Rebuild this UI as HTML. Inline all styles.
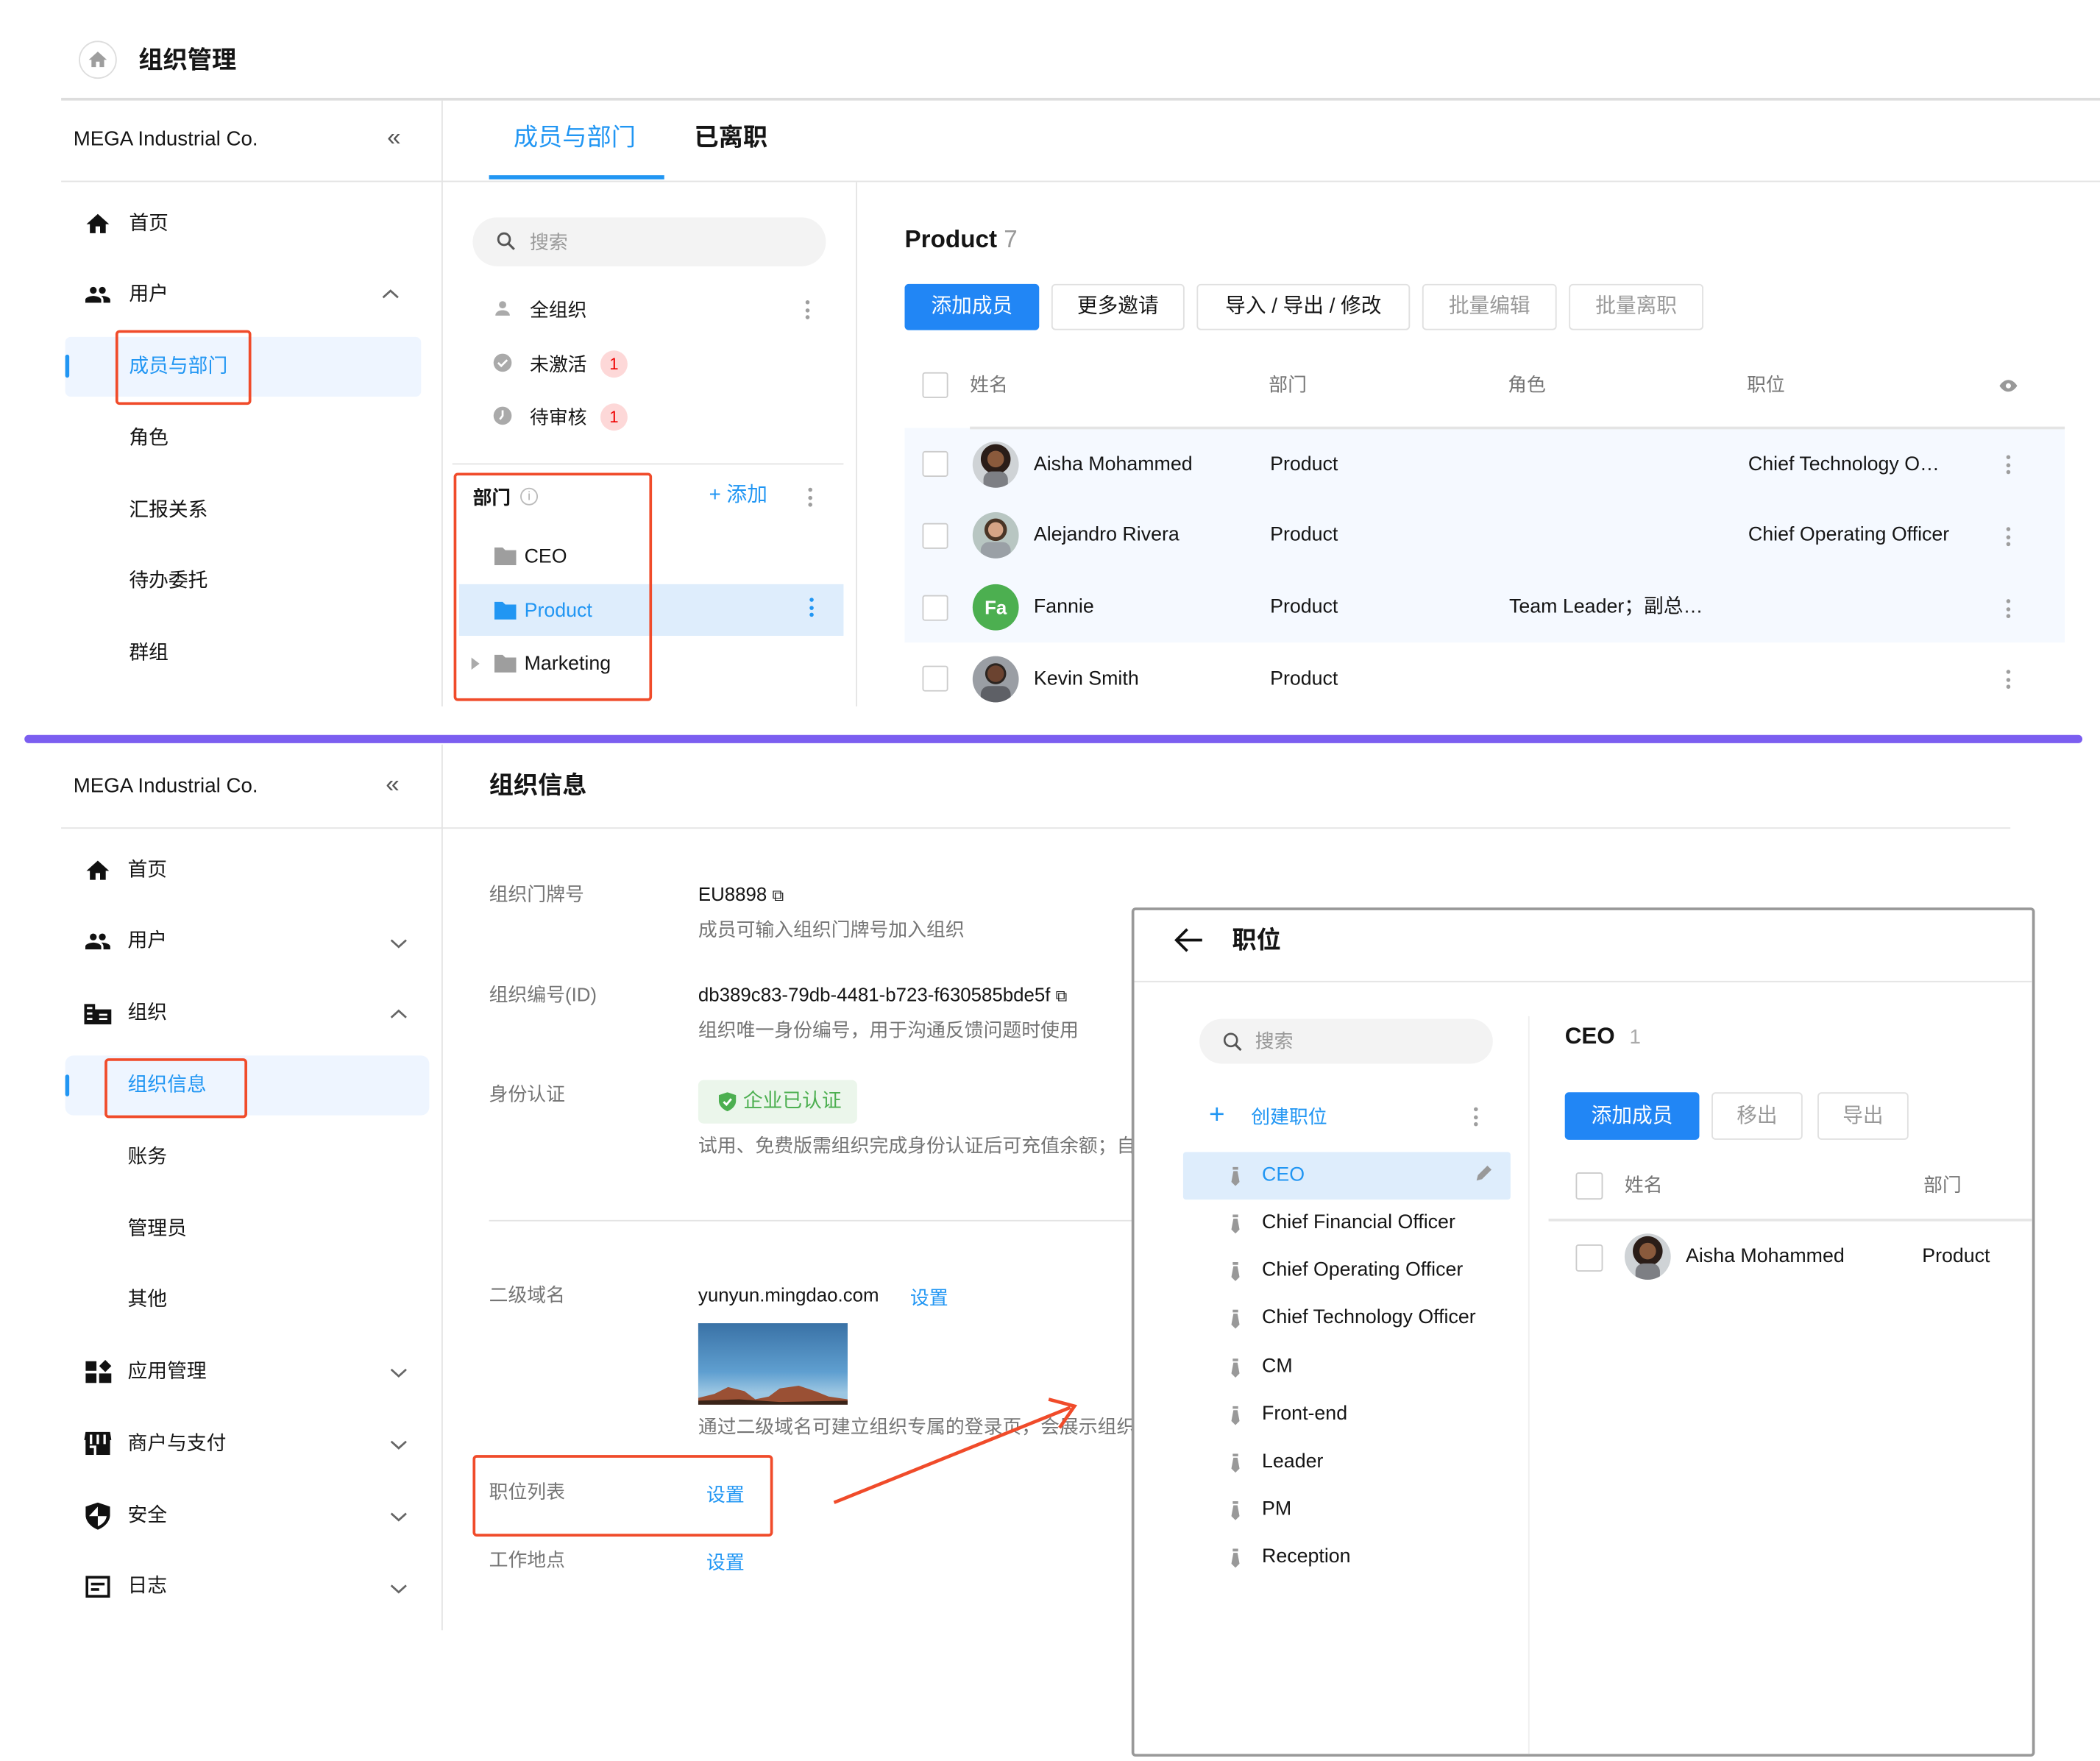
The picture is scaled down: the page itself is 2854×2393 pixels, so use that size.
<!DOCTYPE html>
<html><head><meta charset="utf-8">
<style>
html,body{margin:0;padding:0;background:#fff;}
body{width:2854px;height:2393px;overflow:hidden;position:relative;}
#w{position:absolute;left:0;top:0;width:1546px;height:1296px;transform:scale(1.8461);transform-origin:0 0;font-family:"Liberation Sans","Noto Sans CJK SC",sans-serif;color:#151515;}
.t{position:absolute;line-height:20px;white-space:nowrap;font-size:14.5px;}
.a{position:absolute;}
.g{color:#757575}
.b{color:#2196f3}
.hl{position:absolute;height:1px;background:#e4e4e4}
.vl{position:absolute;width:1px;background:#e4e4e4}
.red{position:absolute;border:2.5px solid #f04b2a;border-radius:3px;box-sizing:border-box}
.btn{position:absolute;height:34px;border:1px solid #e0e0e0;border-radius:3px;box-sizing:border-box;font-size:15px;line-height:32px;text-align:center;background:#fff}
.cb{position:absolute;width:19px;height:19px;border:1px solid #ccc;border-radius:2px;box-sizing:border-box;background:#fff}
.av{position:absolute;width:34px;height:34px;border-radius:50%;overflow:hidden}
.dots{position:absolute;width:3px;}
.dots i{display:block;width:3px;height:3px;border-radius:50%;background:#9e9e9e;margin-bottom:2.5px}
.tie{position:absolute;width:6px;height:12px}
</style></head><body><div id="w">

<!-- header -->
<div class="a" style="left:58px;top:30px;width:28px;height:28px;border-radius:50%;border:1px solid #ddd;box-sizing:border-box"></div>
<svg class="a" style="left:64px;top:36px" width="16" height="16" viewBox="0 0 24 24"><path d="M10 20v-6h4v6h5v-8h3L12 3 2 12h3v8z" fill="#9e9e9e"/></svg>
<div class="t" style="left:102px;top:34px;font-size:18px;font-weight:bold">组织管理</div>
<div class="hl" style="left:45px;top:72px;width:1501px;height:2px;background:#ddd"></div>

<!-- top sidebar -->
<div class="t" style="left:54px;top:93px;font-size:15px">MEGA Industrial Co.</div>
<div class="t" style="left:285px;top:91px;font-size:18px;color:#555">«</div>
<div class="hl" style="left:45px;top:133px;width:1501px"></div>
<div class="vl" style="left:325px;top:74px;height:446px"></div>

<svg class="a" style="left:62px;top:155px" width="20" height="20" viewBox="0 0 24 24"><path d="M10 20v-6h4v6h5v-8h3L12 3 2 12h3v8z" fill="#111"/></svg>
<div class="t" style="left:95px;top:155px">首页</div>
<svg class="a" style="left:61px;top:207px" width="22" height="20" viewBox="0 0 24 24"><path d="M16 11c1.66 0 3-1.34 3-3s-1.34-3-3-3-3 1.34-3 3 1.34 3 3 3zm-8 0c1.66 0 3-1.34 3-3S9.66 5 8 5 5 6.34 5 8s1.34 3 3 3zm0 2c-2.33 0-7 1.17-7 3.5V19h14v-2.5c0-2.33-4.67-3.5-7-3.5zm8 0c-.29 0-.62.02-.97.05 1.16.84 1.97 1.97 1.97 3.45V19h6v-2.5c0-2.33-4.67-3.5-7-3.5z" fill="#111"/></svg>
<div class="t" style="left:95px;top:207px">用户</div>
<svg class="a" style="left:281px;top:212px" width="13" height="9" viewBox="0 0 13 9"><path d="M1 7l5.5-5 5.5 5" stroke="#666" stroke-width="1.5" fill="none"/></svg>
<div class="a" style="left:48px;top:248px;width:262px;height:44px;background:#eef5ff;border-radius:4px"></div>
<div class="a" style="left:48px;top:261px;width:3px;height:17px;background:#2196f3;border-radius:2px"></div>
<div class="t b" style="left:95px;top:260px">成员与部门</div>
<div class="red" style="left:85px;top:243px;width:100px;height:55px"></div>
<div class="t" style="left:95px;top:313px">角色</div>
<div class="t" style="left:95px;top:366px">汇报关系</div>
<div class="t" style="left:95px;top:418px">待办委托</div>
<div class="t" style="left:95px;top:471px">群组</div>

<!-- tabs -->
<div class="t b" style="left:378px;top:91px;font-size:18px">成员与部门</div>
<div class="a" style="left:360px;top:129px;width:129px;height:3px;background:#2196f3"></div>
<div class="t" style="left:511px;top:91px;font-size:18px;font-weight:bold">已离职</div>

<!-- middle panel -->
<div class="vl" style="left:630px;top:134px;height:386px"></div>
<div class="a" style="left:348px;top:160px;width:260px;height:36px;background:#f3f3f3;border-radius:18px"></div>
<svg class="a" style="left:364px;top:169px" width="17" height="17" viewBox="0 0 24 24"><circle cx="10" cy="10" r="6" stroke="#555" stroke-width="2.2" fill="none"/><path d="M14.5 14.5l6 6" stroke="#555" stroke-width="2.4"/></svg>
<div class="t g" style="left:390px;top:168px;font-size:14px;color:#999">搜索</div>
<svg class="a" style="left:362px;top:219px" width="16" height="16" viewBox="0 0 24 24"><circle cx="12" cy="8" r="4" fill="#aaa"/><path d="M4 20c0-4 4-6 8-6s8 2 8 6z" fill="#aaa"/></svg>
<div class="t" style="left:390px;top:218px;font-size:14px">全组织</div>
<div class="dots" style="left:593px;top:221px"><i></i><i></i><i></i></div>
<svg class="a" style="left:362px;top:259px" width="16" height="16" viewBox="0 0 24 24"><circle cx="12" cy="12" r="10" fill="#aaa"/><path d="M7 12l3.5 3.5L17 9" stroke="#fff" stroke-width="2.2" fill="none"/></svg>
<div class="t" style="left:390px;top:258px;font-size:14px">未激活</div>
<div class="a" style="left:442px;top:258px;width:20px;height:20px;border-radius:10px;background:#fdd8d8;color:#e00;font-size:12px;line-height:20px;text-align:center">1</div>
<svg class="a" style="left:362px;top:298px" width="16" height="16" viewBox="0 0 24 24"><circle cx="12" cy="12" r="10" fill="#aaa"/><path d="M12 6v6l-3 4" stroke="#fff" stroke-width="2.2" fill="none"/></svg>
<div class="t" style="left:390px;top:297px;font-size:14px">待审核</div>
<div class="a" style="left:442px;top:297px;width:20px;height:20px;border-radius:10px;background:#fdd8d8;color:#e00;font-size:12px;line-height:20px;text-align:center">1</div>
<div class="hl" style="left:333px;top:341px;width:288px"></div>

<div class="t" style="left:348px;top:356px;font-size:14px;font-weight:bold">部门</div>
<div class="a" style="left:383px;top:359px;width:13px;height:13px;border:1px solid #bbb;border-radius:50%;box-sizing:border-box;font-size:9px;line-height:11px;text-align:center;color:#aaa">i</div>
<div class="t b" style="left:522px;top:355px;font-size:15px">+ 添加</div>
<div class="dots" style="left:595px;top:359px"><i></i><i></i><i></i></div>
<svg class="a" style="left:364px;top:402px" width="16" height="14" viewBox="0 0 16 14"><path d="M0 1h6l2 2h8v11H0z" fill="#9e9e9e"/></svg>
<div class="t" style="left:386px;top:400px">CEO</div>
<div class="a" style="left:338px;top:430px;width:283px;height:38px;background:#deedfc"></div>
<svg class="a" style="left:364px;top:442px" width="16" height="14" viewBox="0 0 16 14"><path d="M0 1h6l2 2h8v11H0z" fill="#2196f3"/></svg>
<div class="t b" style="left:386px;top:440px">Product</div>
<div class="dots" style="left:596px;top:440px"><i style="background:#2196f3"></i><i style="background:#2196f3"></i><i style="background:#2196f3"></i></div>
<svg class="a" style="left:347px;top:484px" width="6" height="9" viewBox="0 0 6 9"><path d="M0 0l6 4.5L0 9z" fill="#aaa"/></svg>
<svg class="a" style="left:364px;top:481px" width="16" height="14" viewBox="0 0 16 14"><path d="M0 1h6l2 2h8v11H0z" fill="#9e9e9e"/></svg>
<div class="t" style="left:386px;top:479px">Marketing</div>
<div class="red" style="left:334px;top:348px;width:146px;height:168px"></div>

<!-- right: product -->
<div class="t" style="left:666px;top:166px;font-size:18px;font-weight:bold">Product <span style="color:#999;font-weight:normal">7</span></div>
<div class="btn" style="left:666px;top:209px;width:99px;background:#2186f5;border-color:#2186f5;color:#fff">添加成员</div>
<div class="btn" style="left:774px;top:209px;width:98px">更多邀请</div>
<div class="btn" style="left:881px;top:209px;width:157px">导入 / 导出 / 修改</div>
<div class="btn" style="left:1047px;top:209px;width:99px;color:#999">批量编辑</div>
<div class="btn" style="left:1155px;top:209px;width:99px;color:#999">批量离职</div>
<div class="cb" style="left:679px;top:274px"></div>
<div class="t g" style="left:714px;top:273px;font-size:14px">姓名</div>
<div class="t g" style="left:934px;top:273px;font-size:14px">部门</div>
<div class="t g" style="left:1110px;top:273px;font-size:14px">角色</div>
<div class="t g" style="left:1286px;top:273px;font-size:14px">职位</div>
<svg class="a" style="left:1472px;top:279px" width="13" height="10" viewBox="0 0 24 16"><path d="M12 0C6 0 2 5 0 8c2 3 6 8 12 8s10-5 12-8C22 5 18 0 12 0z" fill="#999"/><circle cx="12" cy="8" r="3.5" fill="#fff"/></svg>
<div class="a" style="left:666px;top:315px;width:854px;height:158px;background:#f5f9ff"></div>
<div class="hl" style="left:714px;top:314px;width:806px;height:1.5px"></div>

<div class="cb" style="left:679px;top:332px"></div>
<div class="av" style="left:716px;top:325px;background:radial-gradient(circle at 50% 38%,#8a5a3c 0 22%,#2a1d18 23% 40%,#cfd3d6 41%)"><div style="position:absolute;left:8px;top:22px;width:18px;height:14px;background:#7d7f84;border-radius:6px 6px 0 0"></div></div>
<div class="t" style="left:761px;top:332px">Aisha Mohammed</div>
<div class="t" style="left:935px;top:332px">Product</div>
<div class="t" style="left:1287px;top:332px">Chief Technology O…</div>
<div class="dots" style="left:1477px;top:335px"><i></i><i></i><i></i></div>

<div class="cb" style="left:679px;top:385px"></div>
<div class="av" style="left:716px;top:377px;background:radial-gradient(circle at 50% 38%,#d6a486 0 20%,#4a3526 21% 30%,#b8c6c2 31%)"><div style="position:absolute;left:6px;top:22px;width:22px;height:14px;background:#9aa0a6;border-radius:6px 6px 0 0"></div></div>
<div class="t" style="left:761px;top:384px">Alejandro Rivera</div>
<div class="t" style="left:935px;top:384px">Product</div>
<div class="t" style="left:1287px;top:384px">Chief Operating Officer</div>
<div class="dots" style="left:1477px;top:388px"><i></i><i></i><i></i></div>

<div class="cb" style="left:679px;top:438px"></div>
<div class="av" style="left:716px;top:430px;background:#4caf50;color:#fff;font-size:14px;line-height:34px;text-align:center;font-weight:bold">Fa</div>
<div class="t" style="left:761px;top:437px">Fannie</div>
<div class="t" style="left:935px;top:437px">Product</div>
<div class="t" style="left:1111px;top:437px">Team Leader；副总…</div>
<div class="dots" style="left:1477px;top:441px"><i></i><i></i><i></i></div>

<div class="cb" style="left:679px;top:490px"></div>
<div class="av" style="left:716px;top:483px;background:radial-gradient(circle at 50% 38%,#6b4330 0 22%,#2b2420 23% 28%,#9a9ea4 29%)"><div style="position:absolute;left:6px;top:22px;width:22px;height:14px;background:#5e6066;border-radius:6px 6px 0 0"></div></div>
<div class="t" style="left:761px;top:490px">Kevin Smith</div>
<div class="t" style="left:935px;top:490px">Product</div>
<div class="dots" style="left:1477px;top:493px"><i></i><i></i><i></i></div>

<!-- purple bar -->
<div class="a" style="left:18px;top:541px;width:1515px;height:6px;background:#7b5ef0;border-radius:3px"></div>

<!-- bottom sidebar -->
<div class="t" style="left:54px;top:569px;font-size:15px">MEGA Industrial Co.</div>
<div class="t" style="left:284px;top:567px;font-size:18px;color:#555">«</div>
<div class="hl" style="left:45px;top:609px;width:1435px"></div>
<div class="vl" style="left:325px;top:548px;height:652px"></div>
<div class="t" style="left:360px;top:568px;font-size:18px;font-weight:bold">组织信息</div>

<svg class="a" style="left:62px;top:631px" width="20" height="20" viewBox="0 0 24 24"><path d="M10 20v-6h4v6h5v-8h3L12 3 2 12h3v8z" fill="#111"/></svg>
<div class="t" style="left:94px;top:631px">首页</div>
<svg class="a" style="left:61px;top:683px" width="22" height="20" viewBox="0 0 24 24"><path d="M16 11c1.66 0 3-1.34 3-3s-1.34-3-3-3-3 1.34-3 3 1.34 3 3 3zm-8 0c1.66 0 3-1.34 3-3S9.66 5 8 5 5 6.34 5 8s1.34 3 3 3zm0 2c-2.33 0-7 1.17-7 3.5V19h14v-2.5c0-2.33-4.67-3.5-7-3.5zm8 0c-.29 0-.62.02-.97.05 1.16.84 1.97 1.97 1.97 3.45V19h6v-2.5c0-2.33-4.67-3.5-7-3.5z" fill="#111"/></svg>
<div class="t" style="left:94px;top:683px">用户</div>
<svg class="a" style="left:287px;top:690px" width="13" height="9" viewBox="0 0 13 9"><path d="M1 2l5.5 5 5.5-5" stroke="#666" stroke-width="1.5" fill="none"/></svg>
<svg class="a" style="left:62px;top:739px" width="20" height="15" viewBox="0 0 20 15"><path d="M0 0h8v15H0zM8 4h12v11H8z" fill="#111"/><path d="M2 3h4M2 7h4M2 11h4M11 8h6M11 11h6" stroke="#fff" stroke-width="1.5"/></svg>
<div class="t" style="left:94px;top:736px">组织</div>
<svg class="a" style="left:287px;top:742px" width="13" height="9" viewBox="0 0 13 9"><path d="M1 7l5.5-5 5.5 5" stroke="#666" stroke-width="1.5" fill="none"/></svg>
<div class="a" style="left:48px;top:777px;width:268px;height:44px;background:#eef5ff;border-radius:6px"></div>
<div class="a" style="left:48px;top:791px;width:3px;height:16px;background:#2196f3;border-radius:2px"></div>
<div class="t b" style="left:94px;top:789px">组织信息</div>
<div class="red" style="left:77px;top:779px;width:105px;height:44px"></div>
<div class="t" style="left:94px;top:842px">账务</div>
<div class="t" style="left:94px;top:895px">管理员</div>
<div class="t" style="left:94px;top:947px">其他</div>
<svg class="a" style="left:63px;top:1001px" width="19" height="17" viewBox="0 0 19 17"><path d="M0 1h8v7H0zM0 10h8v7H0zM10 10h9v7h-9zM14.5 0l4.5 4.5-4.5 4.5-4.5-4.5z" fill="#111"/></svg>
<div class="t" style="left:94px;top:1000px">应用管理</div>
<svg class="a" style="left:287px;top:1006px" width="13" height="9" viewBox="0 0 13 9"><path d="M1 2l5.5 5 5.5-5" stroke="#666" stroke-width="1.5" fill="none"/></svg>
<svg class="a" style="left:62px;top:1054px" width="20" height="17" viewBox="0 0 20 17"><path d="M1 0h18l1 6H0zM1 6h18v11H1z" fill="#111"/><path d="M5 2v7M10 2v7M15 2v7M4 11h4v6" stroke="#fff" stroke-width="1.8" fill="none"/></svg>
<div class="t" style="left:94px;top:1053px">商户与支付</div>
<svg class="a" style="left:287px;top:1059px" width="13" height="9" viewBox="0 0 13 9"><path d="M1 2l5.5 5 5.5-5" stroke="#666" stroke-width="1.5" fill="none"/></svg>
<svg class="a" style="left:63px;top:1106px" width="18" height="20" viewBox="0 0 18 20"><path d="M9 0l9 3v6c0 5-4 9-9 11C4 18 0 14 0 9V3z" fill="#111"/><path d="M9 3v7H2.5M9 10h6.5c-.5 3.5-3 6-6.5 7.5z" fill="#fff"/></svg>
<div class="t" style="left:94px;top:1106px">安全</div>
<svg class="a" style="left:287px;top:1112px" width="13" height="9" viewBox="0 0 13 9"><path d="M1 2l5.5 5 5.5-5" stroke="#666" stroke-width="1.5" fill="none"/></svg>
<svg class="a" style="left:63px;top:1160px" width="18" height="16" viewBox="0 0 18 16"><rect x="1" y="1" width="16" height="14" stroke="#111" stroke-width="2" fill="none"/><path d="M4 6h10M4 10h6" stroke="#111" stroke-width="2"/></svg>
<div class="t" style="left:94px;top:1158px">日志</div>
<svg class="a" style="left:287px;top:1165px" width="13" height="9" viewBox="0 0 13 9"><path d="M1 2l5.5 5 5.5-5" stroke="#666" stroke-width="1.5" fill="none"/></svg>

<!-- bottom content -->
<div class="t g" style="left:360px;top:648px;font-size:14px">组织门牌号</div>
<div class="t" style="left:514px;top:648px;font-size:14px">EU8898 <span style="font-size:12px">⧉</span></div>
<div class="t g" style="left:514px;top:674px;font-size:14px">成员可输入组织门牌号加入组织</div>
<div class="t g" style="left:360px;top:722px;font-size:14px">组织编号(ID)</div>
<div class="t" style="left:514px;top:722px;font-size:14px">db389c83-79db-4481-b723-f630585bde5f <span style="font-size:12px">⧉</span></div>
<div class="t g" style="left:514px;top:748px;font-size:14px">组织唯一身份编号，用于沟通反馈问题时使用</div>
<div class="t g" style="left:360px;top:795px;font-size:14px">身份认证</div>
<div class="a" style="left:514px;top:795px;width:117px;height:32px;background:#ebf6eb;border-radius:4px"></div>
<svg class="a" style="left:529px;top:804px" width="13" height="14" viewBox="0 0 18 20"><path d="M9 0l9 3v6c0 5-4 9-9 11C4 18 0 14 0 9V3z" fill="#4caf50"/><path d="M5 10l3 3 5-6" stroke="#fff" stroke-width="2.2" fill="none"/></svg>
<div class="t" style="left:547px;top:801px;font-size:14.5px;color:#4caf50">企业已认证</div>
<div class="t g" style="left:514px;top:833px;font-size:14px;width:320px;overflow:hidden">试用、免费版需组织完成身份认证后可充值余额；自</div>
<div class="hl" style="left:360px;top:898px;width:475px"></div>
<div class="t g" style="left:360px;top:943px;font-size:14px">二级域名</div>
<div class="t" style="left:514px;top:943px;font-size:14px">yunyun.mingdao.com</div>
<div class="t b" style="left:670px;top:945px;font-size:14px">设置</div>
<div class="a" style="left:514px;top:974px;width:110px;height:60px;background:linear-gradient(#3a72a6,#5f9fd0 60%,#9cc6e2 85%);overflow:hidden">
<svg width="110" height="60" viewBox="0 0 110 60" style="position:absolute;left:0;top:0"><path d="M0 60V55l12-3 10-5 12 3 8 6 10-2 8-6 14-2 12 4 10 4 14 2V60z" fill="#9a5034"/><path d="M0 60v-3l30-1 30 2 50-1V60z" fill="#3a2418"/></svg></div>
<div class="t g" style="left:514px;top:1040px;font-size:14px;width:320px;overflow:hidden">通过二级域名可建立组织专属的登录页，会展示组织</div>
<div class="t g" style="left:360px;top:1088px;font-size:14px">职位列表</div>
<div class="t b" style="left:520px;top:1090px;font-size:14px">设置</div>
<div class="red" style="left:348px;top:1071px;width:221px;height:60px"></div>
<div class="t g" style="left:360px;top:1138px;font-size:14px">工作地点</div>
<div class="t b" style="left:520px;top:1140px;font-size:14px">设置</div>
<svg class="a" style="left:600px;top:1020px" width="210" height="100" viewBox="0 0 210 100"><path d="M14 86L188 16" stroke="#f04b2a" stroke-width="2.5"/><path d="M172 10L191 15 180 31" stroke="#f04b2a" stroke-width="2.5" fill="none"/></svg>

<!-- modal -->
<div class="a" style="left:833px;top:668px;width:665px;height:625px;border:2px solid #999;border-radius:3px;box-sizing:border-box;background:#fff"></div>
<svg class="a" style="left:864px;top:683px" width="22" height="18" viewBox="0 0 22 18"><path d="M21 9H3M10 1L2 9l8 8" stroke="#111" stroke-width="2" fill="none"/></svg>
<div class="t" style="left:907px;top:682px;font-size:18px;font-weight:bold">职位</div>
<div class="hl" style="left:835px;top:722px;width:661px"></div>
<div class="vl" style="left:1125px;top:748px;height:543px;background:#eee"></div>
<div class="a" style="left:883px;top:750px;width:216px;height:33px;background:#f3f3f3;border-radius:17px"></div>
<svg class="a" style="left:899px;top:758px" width="17" height="18" viewBox="0 0 24 24"><circle cx="10" cy="10" r="6.5" stroke="#555" stroke-width="2" fill="none"/><path d="M14.5 14.5l6 6" stroke="#555" stroke-width="2.4"/></svg>
<div class="t" style="left:924px;top:756px;font-size:14px;color:#999">搜索</div>
<div class="t b" style="left:890px;top:811px;font-size:20px">+</div>
<div class="t b" style="left:921px;top:812px;font-size:14px">创建职位</div>
<div class="dots" style="left:1085px;top:815px"><i></i><i></i><i></i></div>
<div class="a" style="left:871px;top:848px;width:241px;height:35px;background:#deedfc;border-radius:2px"></div>
<div class="t b" style="left:929px;top:855px;font-size:14.5px">CEO</div>
<svg class="a" style="left:1085px;top:857px" width="14" height="14" viewBox="0 0 14 14"><path d="M2 12l1-4 7-7 3 3-7 7z" fill="#999"/></svg>
<div class="t" style="left:929px;top:890px">Chief Financial Officer</div>
<div class="t" style="left:929px;top:925px">Chief Operating Officer</div>
<div class="t" style="left:929px;top:960px">Chief Technology Officer</div>
<div class="t" style="left:929px;top:996px">CM</div>
<div class="t" style="left:929px;top:1031px">Front-end</div>
<div class="t" style="left:929px;top:1066px">Leader</div>
<div class="t" style="left:929px;top:1101px">PM</div>
<div class="t" style="left:929px;top:1136px">Reception</div>
<svg class="a" style="left:906px;top:859px" width="7" height="14" viewBox="0 0 7 14"><path d="M1.5 0h4v2h-4zM2 3h3l1.5 8-3 3-3-3z" fill="#999"/></svg>
<svg class="a" style="left:906px;top:894px" width="7" height="14" viewBox="0 0 7 14"><path d="M1.5 0h4v2h-4zM2 3h3l1.5 8-3 3-3-3z" fill="#999"/></svg>
<svg class="a" style="left:906px;top:929px" width="7" height="14" viewBox="0 0 7 14"><path d="M1.5 0h4v2h-4zM2 3h3l1.5 8-3 3-3-3z" fill="#999"/></svg>
<svg class="a" style="left:906px;top:964px" width="7" height="14" viewBox="0 0 7 14"><path d="M1.5 0h4v2h-4zM2 3h3l1.5 8-3 3-3-3z" fill="#999"/></svg>
<svg class="a" style="left:906px;top:1000px" width="7" height="14" viewBox="0 0 7 14"><path d="M1.5 0h4v2h-4zM2 3h3l1.5 8-3 3-3-3z" fill="#999"/></svg>
<svg class="a" style="left:906px;top:1035px" width="7" height="14" viewBox="0 0 7 14"><path d="M1.5 0h4v2h-4zM2 3h3l1.5 8-3 3-3-3z" fill="#999"/></svg>
<svg class="a" style="left:906px;top:1070px" width="7" height="14" viewBox="0 0 7 14"><path d="M1.5 0h4v2h-4zM2 3h3l1.5 8-3 3-3-3z" fill="#999"/></svg>
<svg class="a" style="left:906px;top:1105px" width="7" height="14" viewBox="0 0 7 14"><path d="M1.5 0h4v2h-4zM2 3h3l1.5 8-3 3-3-3z" fill="#999"/></svg>
<svg class="a" style="left:906px;top:1140px" width="7" height="14" viewBox="0 0 7 14"><path d="M1.5 0h4v2h-4zM2 3h3l1.5 8-3 3-3-3z" fill="#999"/></svg>

<div class="t" style="left:1152px;top:753px;font-size:17px;font-weight:bold">CEO <span style="color:#aaa;font-weight:normal;font-size:15px;margin-left:6px">1</span></div>
<div class="btn" style="left:1152px;top:804px;width:99px;height:35px;line-height:33px;background:#2186f5;border-color:#2186f5;color:#fff">添加成员</div>
<div class="btn" style="left:1260px;top:804px;width:67px;height:35px;line-height:33px;color:#999">移出</div>
<div class="btn" style="left:1338px;top:804px;width:67px;height:35px;line-height:33px;color:#999">导出</div>
<div class="cb" style="left:1160px;top:863px;width:20px;height:20px"></div>
<div class="t g" style="left:1196px;top:862px;font-size:14px">姓名</div>
<div class="t g" style="left:1416px;top:862px;font-size:14px">部门</div>
<div class="hl" style="left:1140px;top:897px;width:356px;background:#e6e6e6;height:1.5px"></div>
<div class="cb" style="left:1160px;top:916px;width:20px;height:20px"></div>
<div class="av" style="left:1196px;top:908px;background:radial-gradient(circle at 50% 38%,#8a5a3c 0 22%,#2a1d18 23% 40%,#cfd3d6 41%)"><div style="position:absolute;left:8px;top:22px;width:18px;height:14px;background:#7d7f84;border-radius:6px 6px 0 0"></div></div>
<div class="t" style="left:1241px;top:915px">Aisha Mohammed</div>
<div class="t" style="left:1415px;top:915px">Product</div>

</div></body></html>
